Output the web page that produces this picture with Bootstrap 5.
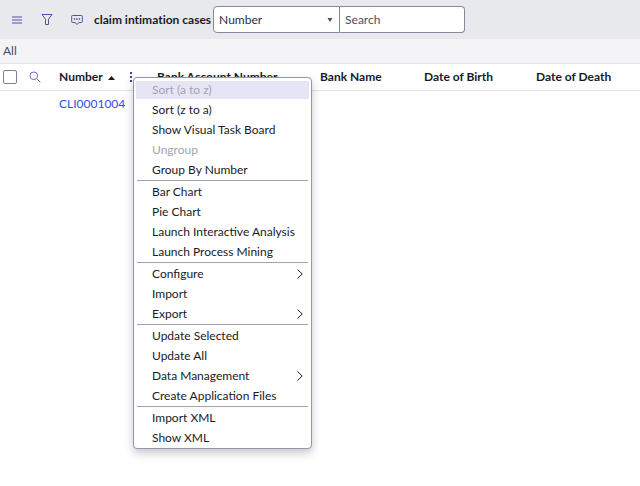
<!DOCTYPE html>
<html lang="en">
<head>
<meta charset="utf-8">
<meta name="viewport" content="width=device-width, initial-scale=1">
<title>claim intimation cases</title>
<link rel="stylesheet" href="https://cdn.jsdelivr.net/npm/bootstrap@5.3.0/dist/css/bootstrap.min.css">
<style>
body { font-family: Lato, "Liberation Sans", sans-serif; font-size: 12px; line-height: 20px; font-variant-ligatures: none; color: #181b26; background: #fff; }
.list-bar { background: #e8e9ec; height: 39px; padding-left: 8px; }
.icon-btn { width: 18px; height: 18px; color: #4f52a8; border: 0; padding: 0; display: flex; align-items: center; justify-content: center; background: none; }
.tool-set { gap: 12px; margin-right: 8px; }
.list-title { font-size: 12px; line-height: 20px; font-weight: 700; margin-right: 2px; }
.search-set { width: 252px; }
.search-set .form-select, .search-set .form-control { height: 27px; font-size: 12px; line-height: 20px; padding: 2px 5px; border-color: #858b9c; color: #2a2e3f; border-radius: 4px; background-color: #fff; }
.search-set .form-select { flex: 0 0 127px; border-top-right-radius: 0; border-bottom-right-radius: 0; background-image: url("data:image/svg+xml,%3Csvg xmlns='http://www.w3.org/2000/svg' viewBox='0 0 6 4'%3E%3Cpath d='M.5 0h5L3 4z' fill='%23485068'/%3E%3C/svg%3E"); background-size: 6px 4px; background-position: right 6px center; }
.search-set .form-control::placeholder { color: #4a5064; opacity: 1; }
.crumbs { background: #f4f4f7; color: #464b5e; height: 25px; padding: 2px 3px; border-bottom: 1px solid #e3e3e7; }
.crumbs a { color: inherit; }
.records { table-layout: fixed; --bs-table-bg: transparent; color: inherit; }
.records th, .records td { padding: 3px 7px; border-color: #e3e4e8; height: 26px; color: inherit; white-space: nowrap; vertical-align: middle; }
.records td { border: 0; }
.records th.tight { padding-left: 3px; padding-right: 0; }
.records .form-check-input { width: 14px; height: 14px; margin: 0; border: 1px solid #7a8296; border-radius: 2px; display: block; }
.c-check { width: 23px; } .c-find { width: 29px; } .c-num { width: 98px; } .c-acct { width: 163px; } .c-bank { width: 104px; } .c-birth { width: 112px; }
.records a { color: #2f50e6; }
.dots { width: 6px; margin-right: 16px; }
.col-menu { left: 81px; top: 13px; width: 179px; min-width: 0; padding: 2px 2px 0; border: 1px solid #9297ac; border-radius: 4px; box-shadow: 0 4px 8px rgba(30,35,60,.25); font-size: 12px; font-weight: 400; --bs-dropdown-link-color: #181b26; }
.col-menu .dropdown-item { padding: 0 6px 0 16px; line-height: 20px; display: flex; justify-content: space-between; align-items: center; }
.col-menu .dropdown-item:disabled { color: #a3a4ae; }
.col-menu .picked { background: linear-gradient(#e6e5f5, #e6e5f5) center / 100% 18px no-repeat; }
.col-menu .dropdown-divider { margin: 0 1px 1px; border-top: 1px solid #a0a3b4; opacity: 1; }
</style>
<script src="https://cdn.jsdelivr.net/npm/bootstrap@5.3.0/dist/js/bootstrap.bundle.min.js" defer></script>
</head>
<body class="min-vh-100">
<header class="list-bar d-flex align-items-center">
  <div class="tool-set d-flex">
    <button class="icon-btn" type="button" aria-label="List menu"><svg width="10" height="8" viewBox="0 0 10 8" fill="none" stroke="currentColor"><path d="M0 1h10M0 4h10M0 7h10"/></svg></button>
    <button class="icon-btn" type="button" aria-label="Filter"><svg width="12" height="13" viewBox="0 0 12 13" fill="none" stroke="currentColor" stroke-linejoin="round"><path d="M1 1.500h10L7.500 6.200v5.300h-3V6.200z"/></svg></button>
    <button class="icon-btn" type="button" aria-label="Activity"><svg width="12" height="12" viewBox="0 0 12 12" fill="none" stroke="currentColor" stroke-linejoin="round"><path d="M1.500 1.500h9a.8.8 0 0 1 .8.8v5.400a.8.8 0 0 1-.8.8H7.800L6 10.600 4.200 8.500H1.500a.8.8 0 0 1-.8-.8V2.300a.8.8 0 0 1 .8-.8z"/><path stroke-width="1.400" d="M2.900 5h1.400M5.300 5h1.400M7.700 5h1.400"/></svg></button>
  </div>
  <h1 class="list-title mb-0 text-nowrap">claim intimation cases</h1>
  <form class="search-set d-flex">
    <select class="form-select" aria-label="Search field"><option>Number</option></select>
    <input class="form-control rounded-start-0 border-start-0" type="text" placeholder="Search" aria-label="Search">
  </form>
</header>
<nav class="crumbs" aria-label="Breadcrumb"><a class="text-decoration-none" href="#">All</a></nav>
<main>
  <table class="records table mb-0">
    <colgroup><col class="c-check"><col class="c-find"><col class="c-num"><col class="c-acct"><col class="c-bank"><col class="c-birth"><col></colgroup>
    <thead>
      <tr>
        <th class="tight"><input class="form-check-input" type="checkbox" aria-label="Select all"></th>
        <th class="tight"><button class="icon-btn" type="button" aria-label="Search columns"><svg width="12" height="12" viewBox="0 0 12 12" fill="none" stroke="#6d6fc4"><circle cx="4.800" cy="4.800" r="3.800"/><path d="M7.600 7.600 11.300 11.300"/></svg></button></th>
        <th class="position-relative pe-0">
          <div class="d-flex align-items-center">
            <span>Number</span>
            <svg class="ms-1 me-auto" width="9" height="5" viewBox="0 0 9 5" fill="currentColor"><path d="M1 5h7L4.500 1z"/></svg>
            <button class="icon-btn dots" type="button" aria-label="Column options" aria-expanded="true"><svg width="4" height="10" viewBox="0 0 4 10" fill="#3d3f99"><path d="M1 0h2v2H1zM1 4h2v2H1zM1 8h2v2H1z"/></svg></button>
          </div>
          <div class="col-menu dropdown-menu show">
            <button class="dropdown-item picked" type="button" disabled>Sort (a to z)</button>
            <button class="dropdown-item" type="button">Sort (z to a)</button>
            <button class="dropdown-item" type="button">Show Visual Task Board</button>
            <button class="dropdown-item" type="button" disabled>Ungroup</button>
            <button class="dropdown-item" type="button">Group By Number</button>
            <hr class="dropdown-divider">
            <button class="dropdown-item" type="button">Bar Chart</button>
            <button class="dropdown-item" type="button">Pie Chart</button>
            <button class="dropdown-item" type="button">Launch Interactive Analysis</button>
            <button class="dropdown-item" type="button">Launch Process Mining</button>
            <hr class="dropdown-divider">
            <button class="dropdown-item" type="button">Configure <svg width="6" height="10" viewBox="0 0 6 10" fill="none" stroke="currentColor"><path d="M.5 .5 5.200 5 .5 9.500"/></svg></button>
            <button class="dropdown-item" type="button">Import</button>
            <button class="dropdown-item" type="button">Export <svg width="6" height="10" viewBox="0 0 6 10" fill="none" stroke="currentColor"><path d="M.5 .5 5.200 5 .5 9.500"/></svg></button>
            <hr class="dropdown-divider">
            <button class="dropdown-item" type="button">Update Selected</button>
            <button class="dropdown-item" type="button">Update All</button>
            <button class="dropdown-item" type="button">Data Management <svg width="6" height="10" viewBox="0 0 6 10" fill="none" stroke="currentColor"><path d="M.5 .5 5.200 5 .5 9.500"/></svg></button>
            <button class="dropdown-item" type="button">Create Application Files</button>
            <hr class="dropdown-divider">
            <button class="dropdown-item" type="button">Import XML</button>
            <button class="dropdown-item" type="button">Show XML</button>
          </div>
        </th>
        <th>Bank Account Number</th>
        <th>Bank Name</th>
        <th>Date of Birth</th>
        <th>Date of Death</th>
      </tr>
    </thead>
    <tbody>
      <tr><td></td><td></td><td><a class="text-decoration-none" href="#">CLI0001004</a></td><td></td><td></td><td></td><td></td></tr>
    </tbody>
  </table>
</main>
</body>
</html>
